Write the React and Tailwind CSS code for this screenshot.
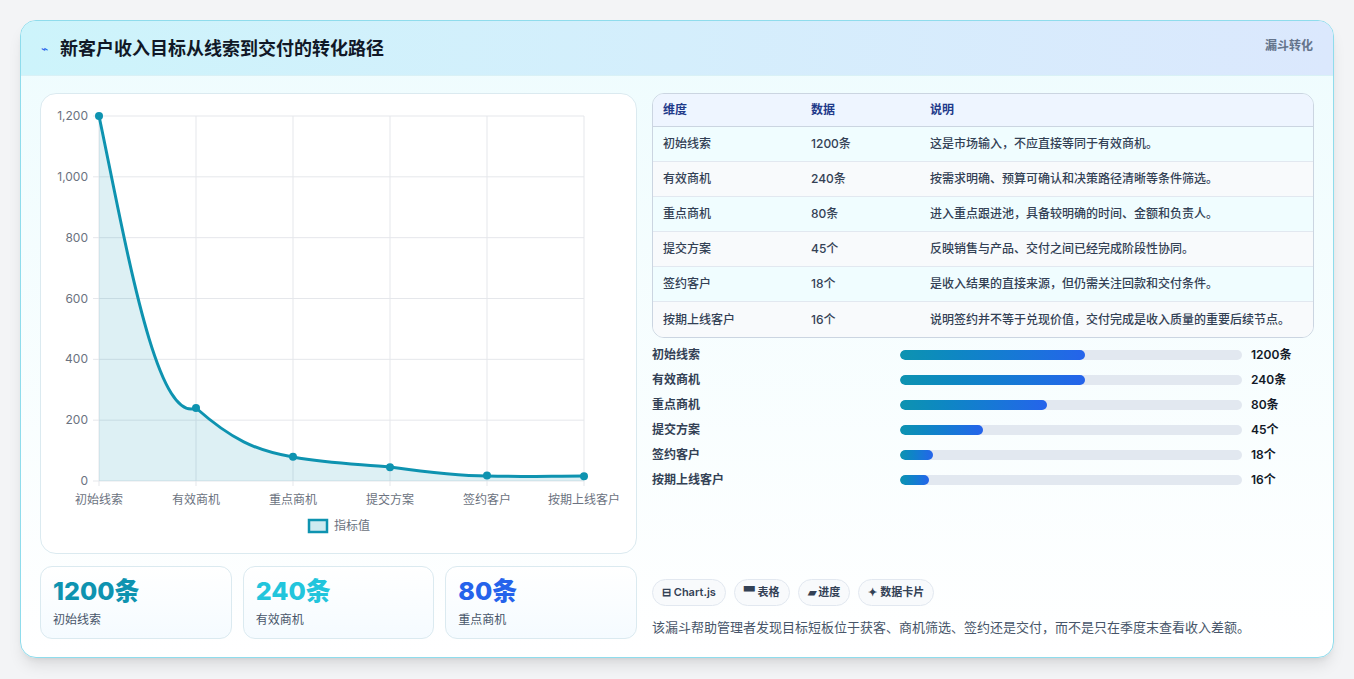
import React from "react";

const rows = [
  ["初始线索", "1200条", "这是市场输入，不应直接等同于有效商机。"],
  ["有效商机", "240条", "按需求明确、预算可确认和决策路径清晰等条件筛选。"],
  ["重点商机", "80条", "进入重点跟进池，具备较明确的时间、金额和负责人。"],
  ["提交方案", "45个", "反映销售与产品、交付之间已经完成阶段性协同。"],
  ["签约客户", "18个", "是收入结果的直接来源，但仍需关注回款和交付条件。"],
  ["按期上线客户", "16个", "说明签约并不等于兑现价值，交付完成是收入质量的重要后续节点。"],
];
const bars = [185, 185, 147, 83, 33, 29];

function Chart() {
  // plot area in svg coords: x 58..543, y 22..387
  const xs = [58, 155, 252, 349, 446, 543];
  const vals = [1200, 240, 80, 45, 18, 16];
  const y = (v) => 387 - (v / 1200) * 365;
  const pts = vals.map((v, i) => [xs[i], y(v)]);
  const line = "M58,22 C85,150 115,330 155,314 C190,345 215,357 252,363 C290,370 320,370 349,373 C385,378 420,382 446,382 C480,383 510,382 543,382";
  return (
    <svg width="597" height="461" className="block">
      {[0, 200, 400, 600, 800, 1000, 1200].map((v) => (
        <g key={v}>
          <line x1="52" x2="543" y1={y(v)} y2={y(v)} stroke="#e5e7eb" />
          <text x="47" y={y(v) + 4} textAnchor="end" fontSize="12" fill="#6b7280">{v.toLocaleString("en-US")}</text>
        </g>
      ))}
      {xs.map((x) => <line key={x} x1={x} x2={x} y1="22" y2="392" stroke="#e5e7eb" />)}
      <path d={line + " L543,387 L58,387 Z"} fill="#0e93b0" fillOpacity="0.14" />
      <path d={line} fill="none" stroke="#0e93b0" strokeWidth="3" />
      {pts.map(([px, py], i) => <circle key={i} cx={px} cy={py} r="4" fill="#0e93b0" />)}
      {["初始线索", "有效商机", "重点商机", "提交方案", "签约客户", "按期上线客户"].map((t, i) => (
        <text key={t} x={xs[i]} y="410" textAnchor="middle" fontSize="12" fill="#6b7280">{t}</text>
      ))}
      <rect x="268" y="426" width="18" height="12" fill="#cfeaf0" stroke="#0e93b0" strokeWidth="2.5" />
      <text x="293" y="436" fontSize="12" fill="#6b7280">指标值</text>
    </svg>
  );
}

export default function App() {
  return (
    <div className="min-h-[679px] bg-[#f3f4f6] pt-5 px-5" style={{ fontFamily: "Inter, 'Noto Sans CJK SC', sans-serif" }}>
      <div className="w-[1314px] h-[638px] rounded-2xl border border-[#8fdcec] bg-gradient-to-b from-[#eefcfe] to-white shadow-lg overflow-hidden">
        <div className="h-[55px] flex justify-between items-start px-5 bg-gradient-to-r from-[#cdf4fb] to-[#dbe8fd] border-b border-[#d9f1f6]">
          <div className="flex items-center gap-3 h-[55px]">
            <span className="text-[#2563eb] text-xs">⌁</span>
            <h1 className="text-[18px] font-bold text-[#111827]">新客户收入目标从线索到交付的转化路径</h1>
          </div>
          <span className="text-[12px] font-semibold text-[#64748b] mt-4">漏斗转化</span>
        </div>
        <div className="flex gap-[15px] px-[19px] pt-[17px]">
          <div className="w-[597px]">
            <div className="h-[461px] rounded-2xl border border-[#dbeaf0] bg-white overflow-hidden">
              <Chart />
            </div>
            <div className="flex gap-[11px] mt-[12px]">
              {[["1200条", "text-[#0e93b0]"], ["240条", "text-[#22c5dc]"], ["80条", "text-[#2563eb]"]].map(([v, c], i) => (
                <div key={v} className="w-[192px] h-[73px] rounded-xl border border-[#dbeaf0] bg-gradient-to-b from-white to-[#f5fbff] px-3 pt-2">
                  <div className={`text-[25px] font-extrabold leading-8 ${c}`}>{v}</div>
                  <div className="text-[12px] text-[#475569] mt-1">{["初始线索", "有效商机", "重点商机"][i]}</div>
                </div>
              ))}
            </div>
          </div>
          <div className="w-[662px] flex flex-col">
            <div className="rounded-xl border border-[#cbd5e1] overflow-hidden">
              <div className="flex h-[33px] items-center bg-[#eef5ff] border-b border-[#cbd5e1] text-[12px] font-semibold text-[#1e3a8a]">
                <span className="w-[158px] pl-[10px]">维度</span><span className="w-[119px]">数据</span><span>说明</span>
              </div>
              {rows.map((r, i) => (
                <div key={r[0]} className={`flex h-[35px] items-center text-[12px] font-medium text-[#334155] ${i < 5 ? "border-b border-[#e2e8f0]" : ""} ${i % 2 ? "bg-[#f8fafc]" : "bg-[#f0fdff]"}`}>
                  <span className="w-[158px] pl-[10px]">{r[0]}</span><span className="w-[119px]">{r[1]}</span><span>{r[2]}</span>
                </div>
              ))}
            </div>
            <div className="mt-[10px] flex flex-col gap-[12px]">
              {rows.map((r, i) => (
                <div key={r[0]} className="flex items-center h-[13px] text-[12px] font-semibold text-[#334155]">
                  <span className="w-[248px]">{r[0]}</span>
                  <div className="w-[342px] h-[10px] rounded-full bg-[#e2e8f0] overflow-hidden">
                    <div className="h-full rounded-full bg-gradient-to-r from-[#0e93b0] to-[#2563eb]" style={{ width: bars[i] }} />
                  </div>
                  <span className="ml-[9px] text-[#111827]">{r[1]}</span>
                </div>
              ))}
            </div>
            <div className="flex gap-[8px] mt-[93px]">
              {["⊟ Chart.js", "▀ 表格", "▰ 进度", "✦ 数据卡片"].map((t) => (
                <span key={t} className="h-[27px] px-[9px] flex items-center rounded-full border border-[#e2e8f0] bg-[#f8fafc] text-[11px] font-semibold text-[#334155]">{t}</span>
              ))}
            </div>
            <p className="mt-[12px] text-[13px] text-[#475569]">该漏斗帮助管理者发现目标短板位于获客、商机筛选、签约还是交付，而不是只在季度末查看收入差额。</p>
          </div>
        </div>
      </div>
    </div>
  );
}
